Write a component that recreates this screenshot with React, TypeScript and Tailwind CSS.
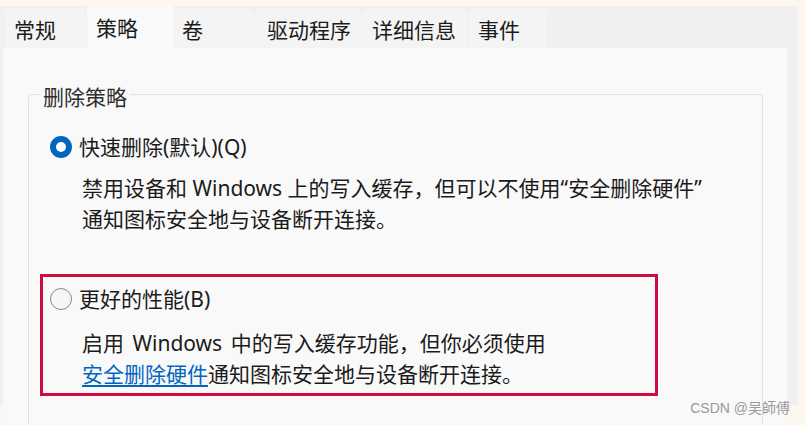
const tabs = [
  { label: "常规", box: "w-[81px] h-[39px] pl-[9px] bg-[#f4f4f4]" },
  { label: "策略", box: "w-[87px] h-[42px] pl-[9px] bg-[#f9f9f9]" },
  { label: "卷", box: "w-[79px] h-[39px] pl-[7px] bg-[#f4f4f4]" },
  { label: "驱动程序", box: "w-[106px] h-[39px] pl-[12px] bg-[#f4f4f4]" },
  { label: "详细信息", box: "w-[106px] h-[39px] pl-[10px] bg-[#f4f4f4]" },
  { label: "事件", box: "w-[78px] h-[39px] pl-[9px] bg-[#f4f4f4]" },
];

const App = () => {
  return (
    <div
      className="relative w-[806px] h-[425px] overflow-hidden bg-[#fdf8ef] pt-[6px] text-[#1b1b1b]"
      style={{ fontFamily: '"Noto Sans", "Noto Sans CJK SC", sans-serif' }}
    >
      {/* dialog window */}
      <div className="flex flex-col w-[798px] h-[399px] bg-[#f0f0f0]">
        {/* tab strip */}
        <div className="flex items-end gap-[1px] h-[46px] pl-[5px]">
          {tabs.map((t) => (
            <div key={t.label} className={`flex items-center rounded-t-[3px] text-[21px] leading-[24px] pt-[2px] ${t.box}`}>
              {t.label}
            </div>
          ))}
        </div>

        {/* page */}
        <div className="flex-1 ml-[3px] w-[784px] bg-[#f9f9f9] pt-[32px]">
          <fieldset className="ml-[25px] w-[735px] h-[400px] border border-[#e2e2e2] rounded-[3px]">
            <legend className="ml-[11px] px-[3px] pt-[6px] text-[21px] leading-[22px] text-[#2e2e2e]">删除策略</legend>

            {/* option 1 */}
            <div className="mt-[24px] flex items-center gap-[7px] h-[30px] pl-[21px]">
              <span className="w-[22px] h-[22px] rounded-full border-[6px] border-[#0067c0] bg-white" />
              <span className="text-[21px] leading-[30px]">快速删除(默认)(Q)</span>
            </div>
            <p className="mt-[11px] pl-[53px] text-[21px] leading-[31px] whitespace-nowrap">
              禁用设备和 Windows 上的写入缓存，但可以不使用“安全删除硬件”
              <br />
              通知图标安全地与设备断开连接。
            </p>

            {/* option 2, marked with the red frame */}
            <div className="mt-[39px] ml-[11px] w-[618px] h-[122px] border-[3px] border-[#cf0a40] pt-[7px]">
              <div className="flex items-center gap-[7px] h-[30px] pl-[7px]">
                <span className="w-[22px] h-[22px] rounded-full border-[1.5px] border-[#8a8a8a] bg-[#f6f6f6]" />
                <span className="text-[21px] leading-[30px]">更好的性能(B)</span>
              </div>
              <p className="mt-[14px] pl-[39px] text-[21px] leading-[31px] whitespace-nowrap">
                启用 <span className="mx-[3px]">Windows</span> 中的写入缓存功能，但你必须使用
                <br />
                <span className="text-[#0067c0] underline underline-offset-[3px]">安全删除硬件</span>
                通知图标安全地与设备断开连接。
              </p>
            </div>
          </fieldset>
        </div>
      </div>

      {/* watermark */}
      <div className="absolute right-[16px] top-[398px] font-['Liberation_Sans','Noto_Sans_CJK_SC',sans-serif] text-[14px] leading-[20px] text-[#9a9a9a]">
        CSDN @吴師傅
      </div>
    </div>
  );
};

export default App;
